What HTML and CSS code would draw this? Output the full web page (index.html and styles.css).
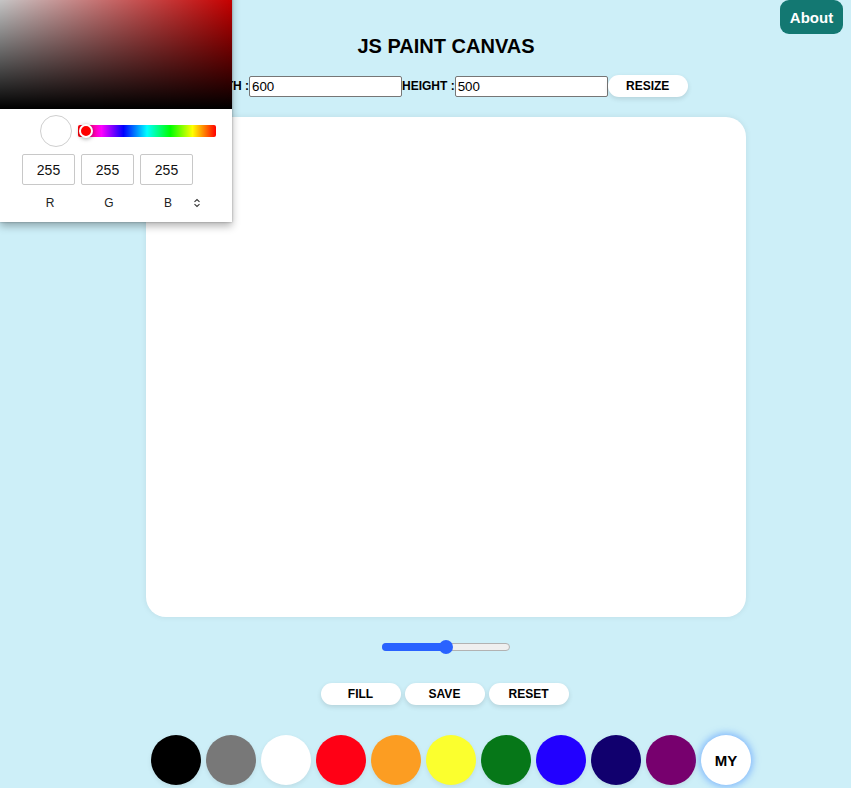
FILE: index.html
```html
<!DOCTYPE html>
<html>
<head>
<meta charset="utf-8">
<link rel="stylesheet" href="styles.css">
</head>
<body>
<main class="app">
  <h1 class="title">JS PAINT CANVAS</h1>
  <div class="size-row">
    <label class="size-label">WIDTH :</label>
    <input class="size-input" type="text" value="600">
    <label class="size-label">HEIGHT :</label>
    <input class="size-input" type="text" value="500">
    <button class="pill-btn">RESIZE</button>
  </div>
  <div class="canvas"></div>
  <div class="slider">
    <div class="slider-fill"></div>
    <div class="slider-thumb"></div>
  </div>
  <div class="actions">
    <button class="pill-btn">FILL</button>
    <button class="pill-btn">SAVE</button>
    <button class="pill-btn">RESET</button>
  </div>
  <div class="palette">
    <span class="swatch c-black"></span>
    <span class="swatch c-gray"></span>
    <span class="swatch c-white"></span>
    <span class="swatch c-red"></span>
    <span class="swatch c-orange"></span>
    <span class="swatch c-yellow"></span>
    <span class="swatch c-green"></span>
    <span class="swatch c-blue"></span>
    <span class="swatch c-navy"></span>
    <span class="swatch c-purple"></span>
    <span class="swatch c-my">MY</span>
  </div>
</main>

<button class="about">About</button>

<div class="picker">
  <div class="sat"></div>
  <div class="picker-body">
    <div class="picker-top">
      <span class="preview"></span>
      <div class="hue"><span class="hue-pointer"></span></div>
    </div>
    <div class="fields">
      <div class="field"><div class="field-box">255</div><div class="field-label">R</div></div>
      <div class="field"><div class="field-box">255</div><div class="field-label">G</div></div>
      <div class="field"><div class="field-box">255</div><div class="field-label">B</div></div>
      <div class="toggle">
        <svg width="8" height="10" viewBox="0 0 8 10"><path d="M1.5 3.8 L4 1.5 L6.5 3.8 M1.5 6.2 L4 8.5 L6.5 6.2" fill="none" stroke="#333" stroke-width="1.1"/></svg>
      </div>
    </div>
  </div>
</div>
</body>
</html>
```

FILE: styles.css
```css
html, body {
  margin: 0;
  padding: 0;
}
body {
  background: #cdeff8;
  font-family: "Liberation Sans", Arial, sans-serif;
  width: 851px;
  height: 788px;
  overflow: hidden;
  position: relative;
}
.app {
  width: 600px;
  margin-left: 146px;
  padding-top: 35px;
  display: flex;
  flex-direction: column;
  align-items: center;
}
.title {
  margin: 0;
  font-size: 20px;
  line-height: 23px;
  font-weight: bold;
  color: #000;
}
.size-row {
  margin-top: 17px;
  margin-left: -2px;
  height: 22px;
  display: flex;
  align-items: center;
  justify-content: center;
  white-space: nowrap;
}
.size-label {
  font-size: 12px;
  font-weight: bold;
  color: #000;
}
.size-input {
  box-sizing: border-box;
  width: 153px;
  height: 21px;
  margin: 0;
  padding: 1px 2px;
  border: 1px solid #767676;
  border-radius: 2px;
  font-family: "Liberation Sans", Arial, sans-serif;
  font-size: 13.33px;
  color: #000;
  background: #fff;
}
.pill-btn {
  box-sizing: border-box;
  width: 80px;
  height: 22px;
  border: none;
  border-radius: 11px;
  background: #fff;
  box-shadow: 0 2px 5px rgba(0, 0, 0, 0.12);
  font-family: "Liberation Sans", Arial, sans-serif;
  font-size: 12px;
  font-weight: bold;
  color: #000;
  padding: 0;
}
.canvas {
  margin-top: 20px;
  width: 600px;
  height: 500px;
  background: #fff;
  border-radius: 20px;
  box-shadow: 0 0 6px rgba(0, 0, 0, 0.08);
  flex-shrink: 0;
}
.slider {
  margin-top: 26px;
  width: 128px;
  height: 8px;
  position: relative;
  background: #efefef;
  border: 1px solid #b2b2b2;
  box-sizing: border-box;
  border-radius: 4px;
  margin-left: -1px;
}
.slider-fill {
  position: absolute;
  left: -1px;
  top: -1px;
  width: 65px;
  height: 8px;
  border-radius: 4px;
  background: #2962ff;
}
.slider-thumb {
  position: absolute;
  left: 56px;
  top: -4px;
  width: 14px;
  height: 14px;
  border-radius: 50%;
  background: #2962ff;
}
.actions {
  margin-top: 32px;
  display: flex;
  gap: 4px;
  margin-left: -3px;
}
.palette {
  margin-top: 30px;
  margin-left: 10px;
  display: flex;
  gap: 5px;
}
.swatch {
  width: 50px;
  height: 50px;
  border-radius: 50%;
  box-shadow: 0 2px 5px rgba(0, 0, 0, 0.08);
  flex-shrink: 0;
}
.c-black { background: #000; }
.c-gray { background: #787878; }
.c-white { background: #fff; }
.c-red { background: #ff0015; }
.c-orange { background: #fc9d22; }
.c-yellow { background: #fbff2e; }
.c-green { background: #067718; }
.c-blue { background: #2200ff; }
.c-navy { background: #11006e; }
.c-purple { background: #77006e; }
.c-my {
  background: #fff;
  box-shadow: 0 0 7px 2px rgba(70, 140, 255, 0.55);
  display: flex;
  align-items: center;
  justify-content: center;
  font-size: 15px;
  font-weight: bold;
  color: #000;
}
.about {
  position: absolute;
  top: 0;
  right: 8px;
  width: 63px;
  height: 34px;
  border: none;
  border-radius: 9px;
  background: #137872;
  color: #fff;
  font-family: "Liberation Sans", Arial, sans-serif;
  font-size: 15px;
  font-weight: bold;
  padding: 0;
}
.picker {
  position: absolute;
  left: 0;
  top: -32px;
  width: 232px;
  background: #fff;
  box-shadow: 0 0 2px rgba(0, 0, 0, 0.3), 0 4px 8px rgba(0, 0, 0, 0.3);
}
.sat {
  height: 141px;
  background:
    linear-gradient(to top, #000, rgba(0, 0, 0, 0)),
    linear-gradient(to right, #fff, rgba(255, 255, 255, 0)),
    #f00;
}
.picker-body {
  padding: 16px 16px 12px 22px;
}
.picker-top {
  display: flex;
  align-items: center;
  gap: 6px;
  padding-left: 18px;
  height: 12px;
}
.preview {
  box-sizing: border-box;
  width: 32px;
  height: 32px;
  border-radius: 50%;
  border: 1px solid #cfcfcf;
  background: #fff;
  flex-shrink: 0;
}
.hue {
  flex: 1;
  height: 12px;
  border-radius: 2px;
  position: relative;
  background: linear-gradient(to right, #f00 0%, #f0f 17%, #00f 33%, #0ff 50%, #0f0 67%, #ff0 83%, #f00 100%);
}
.hue-pointer {
  position: absolute;
  left: 1px;
  top: -1px;
  box-sizing: border-box;
  width: 14px;
  height: 14px;
  border-radius: 50%;
  background: #f00;
  border: 2px solid #fff;
  box-shadow: 0 1px 4px rgba(0, 0, 0, 0.37);
}
.fields {
  margin-top: 17px;
  display: flex;
  gap: 6px;
}
.field {
  width: 53px;
  display: flex;
  flex-direction: column;
  align-items: center;
}
.field-box {
  box-sizing: border-box;
  width: 53px;
  height: 31px;
  border: 1px solid #c8c8c8;
  border-radius: 2px;
  font-size: 14px;
  color: #111;
  display: flex;
  align-items: center;
  justify-content: center;
}
.field-label {
  margin-top: 11px;
  padding-left: 3px;
  font-size: 12px;
  line-height: 14px;
  color: #222;
}
.toggle {
  margin-top: 42px;
  margin-left: -6px;
  height: 14px;
  display: flex;
  align-items: center;
}
```
